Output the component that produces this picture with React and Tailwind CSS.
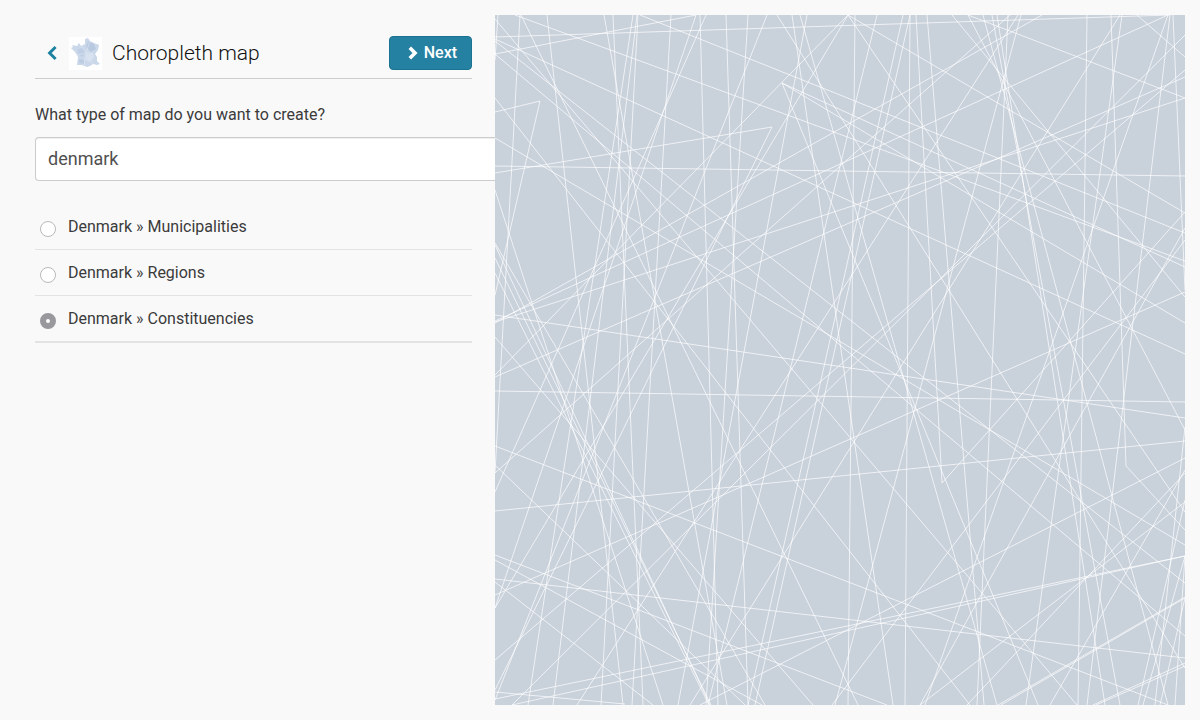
import React, { useState } from 'react'

const mapTypes = [
  { id: 'municipalities', name: 'Denmark » Municipalities' },
  { id: 'regions', name: 'Denmark » Regions' },
  { id: 'constituencies', name: 'Denmark » Constituencies' }
]

// x1, y1, x2, y2
const lines = [
  [495, 37, 1170, 15], [495, 54, 696, 15], [515, 15, 1185, 261], [495, 39, 1185, 354],
  [640, 15, 1185, 233], [521, 15, 858, 705], [495, 19, 1077, 705], [495, 41, 1185, 583],
  [495, 54, 1185, 636], [495, 98, 970, 705], [495, 138, 1185, 545], [495, 166, 1185, 176],
  [495, 173, 772, 127], [772, 127, 495, 690], [495, 112, 540, 101], [540, 101, 495, 295],
  [498, 15, 495, 60], [520, 15, 495, 473], [547, 15, 623, 705], [604, 15, 727, 705],
  [613, 15, 643, 705], [633, 15, 528, 705], [637, 15, 553, 705], [638, 15, 601, 705],
  [671, 15, 632, 705], [696, 15, 495, 608], [706, 15, 495, 492], [700, 15, 718, 705],
  [726, 15, 748, 705], [748, 15, 706, 705], [767, 15, 495, 700], [848, 15, 495, 375],
  [848, 15, 495, 608], [777, 15, 1185, 668], [792, 15, 893, 705], [800, 15, 997, 705],
  [807, 15, 678, 705], [855, 15, 848, 705], [877, 15, 708, 705], [903, 15, 748, 705],
  [910, 15, 755, 705], [910, 15, 905, 705], [916, 15, 942, 483], [942, 483, 1185, 212],
  [927, 15, 984, 705], [848, 15, 1185, 512], [848, 15, 1185, 213], [952, 15, 1185, 297],
  [968, 15, 1185, 98], [968, 15, 1185, 430], [983, 15, 1168, 705], [992, 15, 1120, 705],
  [997, 15, 1105, 705], [1008, 15, 977, 705], [1021, 15, 835, 705], [1018, 15, 577, 705],
  [1042, 15, 495, 323], [1168, 15, 495, 321], [1120, 15, 690, 705], [1010, 15, 495, 473],
  [1087, 15, 1078, 705], [1111, 15, 1126, 466], [1126, 466, 1185, 530], [1122, 15, 1026, 705],
  [1137, 15, 1185, 57], [1168, 15, 925, 705], [1170, 15, 1087, 705], [1173, 15, 1185, 290],
  [1185, 35, 512, 705], [1185, 70, 495, 660], [1185, 77, 495, 377], [1185, 98, 495, 322],
  [782, 83, 1185, 267], [782, 83, 1185, 323], [782, 83, 1038, 705], [495, 190, 663, 705],
  [495, 243, 765, 705], [495, 245, 710, 705], [495, 258, 711, 705], [495, 273, 709, 705],
  [495, 315, 1185, 418], [495, 337, 813, 705], [495, 391, 1185, 402], [495, 446, 1168, 705],
  [495, 465, 745, 705], [495, 511, 1185, 441], [495, 555, 887, 705], [495, 560, 762, 705],
  [495, 579, 1185, 658], [495, 582, 653, 705], [495, 692, 625, 704], [495, 699, 1185, 556],
  [512, 705, 1185, 556], [495, 595, 1185, 292], [700, 705, 1185, 458], [998, 705, 1185, 597],
  [1001, 705, 1185, 598], [1093, 705, 1185, 663], [1096, 705, 1185, 666], [967, 705, 1185, 473],
  [920, 705, 1185, 502], [1050, 705, 1185, 470], [832, 705, 1185, 240], [920, 705, 1185, 228],
  [1138, 705, 1185, 500], [1143, 705, 1185, 556], [1155, 705, 1185, 427], [1160, 705, 1185, 598],
  [1175, 705, 1185, 556]
]

const ChevronLeft = () => (
  <svg viewBox="0 0 10 16" className="h-4 w-[10px]" aria-hidden="true">
    <path d="M8.6 2 L2.6 8 L8.6 14" fill="none" stroke="currentColor" strokeWidth="3" />
  </svg>
)

const ChevronRight = () => (
  <svg viewBox="0 0 10 14" className="h-[14px] w-[10px]" aria-hidden="true">
    <path d="M1.8 1.8 L7 7 L1.8 12.2" fill="none" stroke="currentColor" strokeWidth="3.6" />
  </svg>
)

const FranceIcon = () => (
  <svg viewBox="0 0 33 33" className="h-[33px] w-[33px] bg-white" aria-hidden="true">
    <path
      d="M16 2 L19 1 L21 4 L25 6 L30 8 L29 13 L26 17 L28 20 L28 24 L31 27 L28 28 L24 27 L21 29 L18 30 L13 28 L8 28 L9 20 L6 15 L2 11 L4 10 L3 8 L8 9 L10 6 L12 9 L16 7 Z"
      fill="#cbd8ea"
    />
    <path d="M19 4 L25 7 L27 12 L22 15 L17 10 Z" fill="#b9c9e0" />
    <path d="M9 12 L14 11 L17 16 L13 20 L9 17 Z" fill="#bfcee4" />
    <path d="M18 17 L24 16 L25 21 L20 25 L16 22 Z" fill="#d7e1f0" />
    <path d="M10 22 L15 23 L15 27 L10 26 Z" fill="#bccce3" />
    <path d="M12 9 L17 16 L24 16 M17 16 L15 28 M21 4 L17 16 L8 18 M24 27 L17 16" fill="none" stroke="#dfe7f3" strokeWidth="0.6" />
  </svg>
)

const MapPreview = () => (
  <svg viewBox="495 15 690 690" className="block aspect-square w-full bg-[#c9d1db]" aria-hidden="true">
    <g stroke="#ffffff" strokeOpacity="0.7" strokeWidth="1">
      {lines.map(([x1, y1, x2, y2], i) => (
        <line key={i} x1={x1} y1={y1} x2={x2} y2={y2} />
      ))}
    </g>
  </svg>
)

const App = () => {
  const [query, setQuery] = useState('denmark')
  const [selected, setSelected] = useState('constituencies')

  return (
    <div className="flex min-h-screen bg-[#f9f9f9] font-['Roboto',sans-serif] text-base text-[#3b3b3b]">
      <main className="min-w-0 flex-1 overflow-hidden pt-9 pl-[35px]">
        <header className="mr-[23px] flex items-center border-b border-[#cccccc] pb-2">
          <button type="button" aria-label="Back" className="mr-3 ml-3 text-[#1d81a2]">
            <ChevronLeft />
          </button>
          <FranceIcon />
          <h1 className="ml-[10px] text-[21px] leading-8 font-light text-[#111111]">Choropleth map</h1>
          <button
            type="button"
            className="ml-auto flex h-[34px] items-center gap-[6px] rounded border border-[#1c7391] bg-[#2581a1] pr-[14px] pl-[18px] font-medium text-white"
          >
            <ChevronRight />
            Next
          </button>
        </header>

        <label htmlFor="map-search" className="mt-6 block leading-6">
          What type of map do you want to create?
        </label>
        <input
          id="map-search"
          type="text"
          value={query}
          onChange={(e) => setQuery(e.target.value)}
          className="mt-[10px] block h-11 w-full rounded-l border border-r-0 border-[#cccccc] bg-white px-3 pb-[2px] text-lg text-[#505050] shadow-[inset_0_1px_1px_rgba(0,0,0,0.07)] outline-none"
        />

        <div className="mt-[23px] mr-[23px]">
          {mapTypes.map((type) => (
            <label
              key={type.id}
              className="flex h-[46px] items-center gap-3 border-b border-[#e3e3e3] pl-[5px] last:h-[47px] last:border-b-2"
            >
              <input
                type="radio"
                name="map-type"
                checked={selected === type.id}
                onChange={() => setSelected(type.id)}
                className="mt-1 h-4 w-4 appearance-none rounded-full border border-[#b9b9b9] bg-white checked:border-[6px] checked:border-[#98989d]"
              />
              {type.name}
            </label>
          ))}
        </div>
      </main>

      <aside className="w-[58.75%] shrink-0 py-[15px] pr-[15px]">
        <MapPreview />
      </aside>
    </div>
  )
}

export default App
